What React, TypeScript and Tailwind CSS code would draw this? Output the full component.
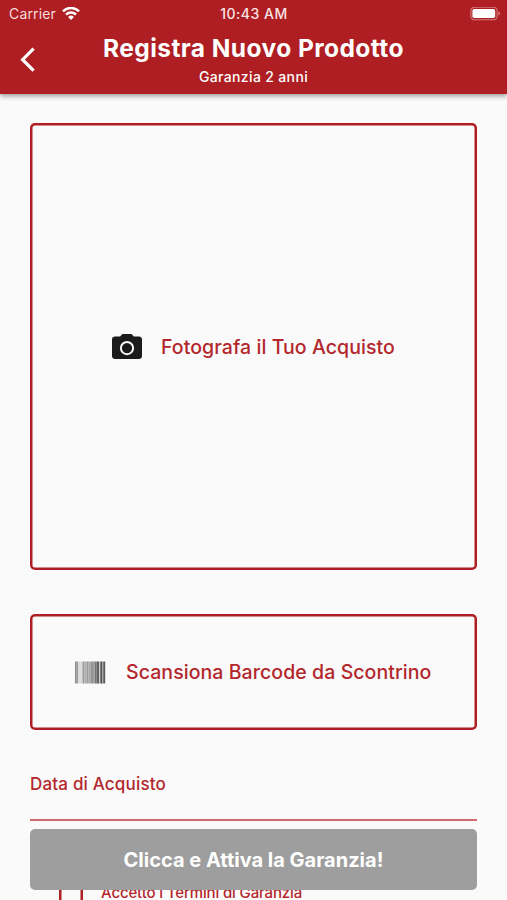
import type { ReactNode } from "react";

const BARS = [
  { x: 0, w: 1.2, fill: "#8a8a8a" },
  { x: 1.2, w: 1.8, fill: "#9c9c9c" },
  { x: 3, w: 4.5, fill: "#dcdcdc" },
  { x: 7.5, w: 2, fill: "#999999" },
  { x: 9.5, w: 2, fill: "#b0b0b0" },
  { x: 11.5, w: 2, fill: "#9c9c9c" },
  { x: 13.5, w: 2, fill: "#a8a8a8" },
  { x: 15.5, w: 2.5, fill: "#949494" },
  { x: 18, w: 1.5, fill: "#a2a2a2" },
  { x: 19.5, w: 2, fill: "#767676" },
  { x: 21.5, w: 2.7, fill: "#626262" },
  { x: 24.2, w: 1.1, fill: "#cfcfcf" },
  { x: 25.3, w: 2.2, fill: "#505050" },
  { x: 27.5, w: 0.7, fill: "#b5b5b5" },
  { x: 28.2, w: 2, fill: "#5c5c5c" },
];

function WifiIcon() {
  return (
    <svg className="h-[14px] w-[18px]" viewBox="0 0 18 14" fill="none" stroke="white" strokeWidth="2.5">
      <path d="M1 4.3a11.300 11.300 0 0 1 16 0" />
      <path d="M4 7.600a7.100 7.100 0 0 1 10 0" />
      <path d="M9 12.900 6.100 9.900a4.100 4.100 0 0 1 5.800 0z" fill="white" stroke="none" />
    </svg>
  );
}

function BatteryIcon() {
  return (
    <svg className="h-[14px] w-[31px]" viewBox="0 0 31 14">
      <rect x="0.9" y="0.2" width="26.2" height="12.6" rx="3.6" fill="none" stroke="#d0797c" strokeWidth="1.1" />
      <rect x="2.4" y="1.9" width="22.8" height="9.2" rx="1.8" fill="white" />
      <path d="M28.400 4.500v4c1-.4 1.700-1.100 1.700-2s-.7-1.600-1.700-2z" fill="#d0797c" />
    </svg>
  );
}

function CameraIcon() {
  return (
    <svg className="h-9 w-9" viewBox="0 0 24 24">
      <path
        d="M9 3.300 7.400 5H4c-1.100 0-2 .8-2 1.800v11.400c0 1 .9 1.800 2 1.800h16c1.100 0 2-.8 2-1.800V6.800c0-1-.9-1.800-2-1.800h-3.400L15 3.300z"
        fill="#1b1b1b"
      />
      <circle cx="12" cy="12.700" r="4.100" fill="none" stroke="#fafafa" strokeWidth="1.300" />
    </svg>
  );
}

function BarcodeIcon() {
  return (
    <svg className="h-[23px] w-[31px]" viewBox="0 0 31 23">
      {BARS.map((bar) => (
        <rect key={bar.x} x={bar.x} y="0.500" width={bar.w} height="22" fill={bar.fill} />
      ))}
    </svg>
  );
}

function ActionBox({ className, children }: { className: string; children: ReactNode }) {
  return (
    <button
      className={`flex w-full items-center rounded-[5px] text-[19.5px] font-medium tracking-[0.07px] text-[#b3272c] shadow-[inset_0_0_0_2.5px_#ae1e22] ${className}`}
    >
      {children}
    </button>
  );
}

export default function App() {
  return (
    <div className="relative h-[900px] w-full overflow-hidden bg-[#fafafa] font-['Inter','Liberation_Sans',sans-serif]">
      <header className="h-[94px] bg-[#ae1e22] text-white shadow-[0_2px_5px_rgba(0,0,0,0.4)]">
        <div className="grid h-[27px] grid-cols-3 items-center">
          <div className="flex items-center gap-1.5 pl-[9px] text-[14px] tracking-[0.15px] text-[#f6dcdc]">
            <span>Carrier</span>
            <WifiIcon />
          </div>
          <span className="pl-px text-center text-[14px] font-medium tracking-[0.5px] text-[#f9e4e4]">10:43 AM</span>
          <div className="flex justify-end pr-[6px]">
            <BatteryIcon />
          </div>
        </div>
        <div className="grid h-[67px] grid-cols-[60px_1fr_60px]">
          <button className="flex items-start pt-[20px] pl-[19px]">
            <svg className="h-[26px] w-[18px]" viewBox="0 0 18 26" fill="none" stroke="white" strokeWidth="3.2">
              <path d="M14.600 1.700 3.600 12.700l11 11" />
            </svg>
          </button>
          <div className="flex flex-col items-center whitespace-nowrap pt-[5px]">
            <h1 className="text-[24.5px] leading-[32px] font-bold tracking-[0.43px]">Registra Nuovo Prodotto</h1>
            <p className="text-[14px] leading-[25px] font-medium tracking-[0.35px]">Garanzia 2 anni</p>
          </div>
        </div>
      </header>

      <main className="px-[30px] pt-[29px]">
        <ActionBox className="h-[447px] gap-[16px] pl-[79px]">
          <CameraIcon />
          <span className="pt-[2px] whitespace-nowrap">Fotografa il Tuo Acquisto</span>
        </ActionBox>
        <ActionBox className="mt-[44px] h-[116px] gap-[20px] pl-[45px]">
          <BarcodeIcon />
          <span className="pt-[2px] whitespace-nowrap">Scansiona Barcode da Scontrino</span>
        </ActionBox>

        <div className="mt-[41px] h-[48px] text-[17px] leading-[26px] font-medium tracking-[0.18px] text-[#b3272c]">
          Data di Acquisto
        </div>
        <div className="h-[2px] bg-[#d06a6d]" />

        <label className="mt-[61px] flex items-start gap-[18px] pl-[29px] text-[15px] leading-[22px] font-medium tracking-[-0.14px] text-[#b3272c]">
          <span className="h-6 w-6 shrink-0 shadow-[inset_0_0_0_2.5px_#ae1e22]" />
          <span className="whitespace-nowrap">Accetto i Termini di Garanzia</span>
        </label>
      </main>

      <button className="absolute top-[829px] right-[30px] left-[30px] h-[61px] rounded-[5px] bg-[#9e9e9e] text-[20px] font-bold text-white">
        Clicca e Attiva la Garanzia!
      </button>
    </div>
  );
}
